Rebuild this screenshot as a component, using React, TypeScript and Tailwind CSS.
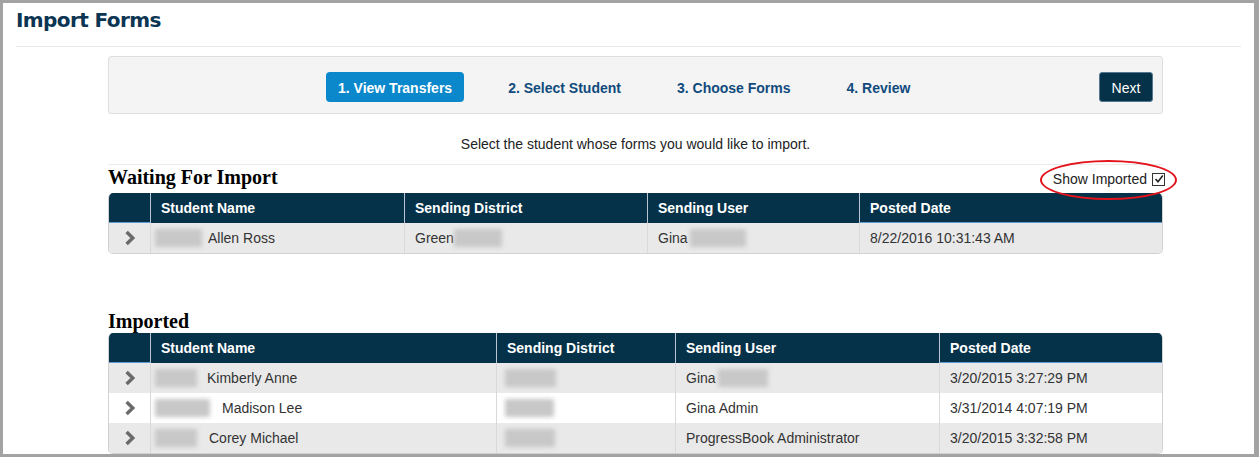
import React from 'react';

interface Cell {
  text?: string;
  blur?: string; // width class for the redacted block
  blurFirst?: boolean;
  gap?: string;
}

interface Row {
  cells: Cell[];
}

const steps = ['1. View Transfers', '2. Select Student', '3. Choose Forms', '4. Review'];

const waitingCols = 'grid-cols-[41px_254px_243px_212px_1fr]';
const importedCols = 'grid-cols-[41px_346px_179px_264px_1fr]';

const headers = ['Student Name', 'Sending District', 'Sending User', 'Posted Date'];

const waitingRows: Row[] = [
  {
    cells: [
      { text: 'Allen Ross', blur: 'w-[47px]', blurFirst: true, gap: 'gap-[6px]' },
      { text: 'Green', blur: 'w-[48px]', gap: 'gap-0' },
      { text: 'Gina', blur: 'w-[56px]', gap: 'gap-[2px]' },
      { text: '8/22/2016 10:31:43 AM' },
    ],
  },
];

const importedRows: Row[] = [
  {
    cells: [
      { text: 'Kimberly Anne', blur: 'w-[42px]', blurFirst: true, gap: 'gap-[10px]' },
      { blur: 'w-[51px]' },
      { text: 'Gina', blur: 'w-[50px]', gap: 'gap-[2px]' },
      { text: '3/20/2015 3:27:29 PM' },
    ],
  },
  {
    cells: [
      { text: 'Madison Lee', blur: 'w-[55px]', blurFirst: true, gap: 'gap-[12px]' },
      { blur: 'w-[49px]' },
      { text: 'Gina Admin' },
      { text: '3/31/2014 4:07:19 PM' },
    ],
  },
  {
    cells: [
      { text: 'Corey Michael', blur: 'w-[42px]', blurFirst: true, gap: 'gap-[12px]' },
      { blur: 'w-[50px]' },
      { text: 'ProgressBook Administrator' },
      { text: '3/20/2015 3:32:58 PM' },
    ],
  },
];

function Chevron() {
  return (
    <svg width="12" height="16" viewBox="0 0 12 16" className="block">
      <path d="M2.6 2 L8.8 8 L2.6 14" fill="none" stroke="#6a6a6a" strokeWidth="3.4" strokeLinejoin="miter" />
    </svg>
  );
}

function Blur({ w }: { w: string }) {
  return <span className={`inline-block h-[18px] ${w} bg-[#c8c8c8] blur-[2px]`} />;
}

function DataCell({ cell, first }: { cell: Cell; first?: boolean }) {
  return (
    <div
      className={`flex items-center border-l border-[#d9d9d9] ${first ? 'pl-[4px]' : cell.text ? 'pl-[10px]' : 'pl-[8px]'} ${cell.gap ?? 'gap-0'}`}
    >
      {cell.blur && cell.blurFirst && <Blur w={cell.blur} />}
      {cell.text && <span>{cell.text}</span>}
      {cell.blur && !cell.blurFirst && <Blur w={cell.blur} />}
    </div>
  );
}

function DataTable({ cols, rows }: { cols: string; rows: Row[] }) {
  return (
    <div className="overflow-hidden rounded-[5px] border border-t-0 border-[#d2d2d2]">
      <div className={`grid ${cols} h-[30px] bg-[#063249] text-[14px] font-bold text-white`}>
        <div className="shadow-[inset_0_-1px_0_#5f9bd0]" />
        {headers.map((h, i) => (
          <div
            key={h}
            className={`flex items-center border-l border-[#b9c6d1] pl-[10px] ${i === headers.length - 1 ? 'shadow-[inset_0_-1px_0_#5f9bd0]' : ''}`}
          >
            {h}
          </div>
        ))}
      </div>
      {rows.map((r, ri) => (
        <div
          key={ri}
          className={`grid ${cols} h-[30px] text-[14px] text-[#333] ${ri % 2 === 0 ? 'bg-[#e9e9e9]' : 'bg-white'}`}
        >
          <div className="flex items-center justify-center">
            <Chevron />
          </div>
          {r.cells.map((c, ci) => (
            <DataCell key={ci} cell={c} first={ci === 0} />
          ))}
        </div>
      ))}
    </div>
  );
}

export default function App() {
  return (
    <div className="h-[457px] w-full overflow-hidden border-t-[3px] border-l-[3px] border-r-[5px] border-b-[3px] border-[#a3a3a3] bg-white font-['Liberation_Sans',Arial,sans-serif]">
      {/* Page title */}
      <div className="mx-[13px] h-[44px] border-b border-[#e8e8e8] pt-[5px]">
        <h1 className="font-['DejaVu_Sans',Verdana,sans-serif] text-[20px] font-bold leading-[24px] tracking-[-0.6px] text-[#0b3552]">
          Import Forms
        </h1>
      </div>

      <div className="ml-[105px] w-[1055px]">
        {/* Wizard steps */}
        <div className="mt-[9px] flex h-[58px] items-start rounded-[3px] border border-[#dedede] bg-[#f4f4f4] pt-[15px] pl-[217px] pr-[9px]">
          <div className="flex gap-8">
            {steps.map((s, i) => (
              <div
                key={s}
                className={`flex h-[30px] items-center rounded-[4px] px-3 pt-[2px] text-[14px] font-bold ${i === 0 ? 'bg-[#0a88cb] text-white' : 'text-[#114b7d]'}`}
              >
                {s}
              </div>
            ))}
          </div>
          <button className="ml-auto flex h-[30px] w-[54px] items-center justify-center rounded-[3px] border border-[#56778f] bg-[#063249] pt-[2px] text-[14px] text-white">
            Next
          </button>
        </div>

        <div className="mt-[20px] border-b border-[#ebebeb] pb-[10px] text-center text-[14px] leading-[20px] text-[#222]">
          Select the student whose forms you would like to import.
        </div>

        {/* Waiting for import */}
        <div className="relative flex h-[28px] items-start justify-between">
          <h2 className="font-['Liberation_Serif','Times_New_Roman',serif] text-[20px] font-bold leading-[24px] text-black">
            Waiting For Import
          </h2>
          <label className="mr-[-2px] mt-[7px] flex items-center gap-[5px] text-[14px] leading-[14px] text-[#222]">
            Show Imported
            <span className="flex h-[13px] w-[13px] items-center justify-center border border-[#333] bg-white">
              <svg width="10" height="10" viewBox="0 0 10 10">
                <path d="M1.5 5 L4 7.8 L8.8 1.5" fill="none" stroke="#222" strokeWidth="1.6" />
              </svg>
            </span>
          </label>
          <div className="pointer-events-none absolute right-[-14px] top-[-5px] h-[40px] w-[137px] rounded-[50%] border-2 border-[#e3121b]" />
        </div>
        <DataTable cols={waitingCols} rows={waitingRows} />

        {/* Imported */}
        <h2 className="mt-[55px] font-['Liberation_Serif','Times_New_Roman',serif] text-[20px] font-bold leading-[24px] text-black">
          Imported
        </h2>
        <DataTable cols={importedCols} rows={importedRows} />
      </div>
    </div>
  );
}
